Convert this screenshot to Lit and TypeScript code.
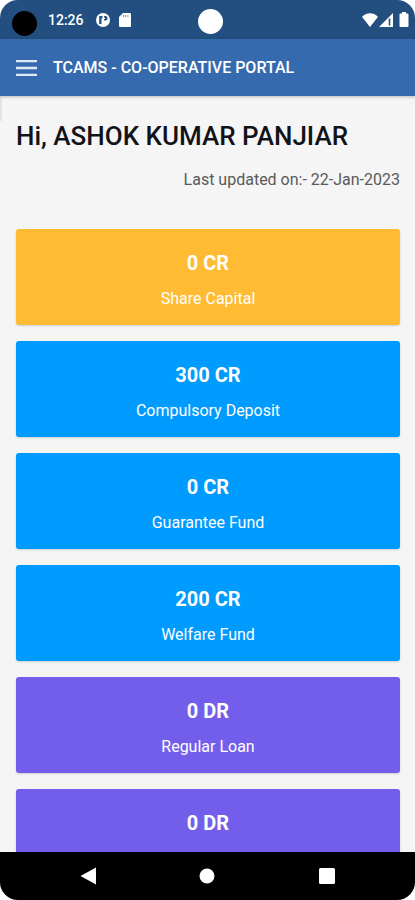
import { LitElement, html, css, svg, nothing } from "lit";
import { customElement, property } from "lit/decorators.js";

interface Account {
  amount: string;
  label?: string;
  tone: "amber" | "blue" | "violet";
}

const accounts: Account[] = [
  { amount: "0 CR", label: "Share Capital", tone: "amber" },
  { amount: "300 CR", label: "Compulsory Deposit", tone: "blue" },
  { amount: "0 CR", label: "Guarantee Fund", tone: "blue" },
  { amount: "200 CR", label: "Welfare Fund", tone: "blue" },
  { amount: "0 DR", label: "Regular Loan", tone: "violet" },
  { amount: "0 DR", tone: "violet" },
];

@customElement("status-bar")
class StatusBar extends LitElement {
  static styles = css`
    :host {
      display: grid;
      grid-template-columns: 1fr auto 1fr;
      align-items: center;
      height: 39px;
      padding: 0 6px 0 12px;
      box-sizing: border-box;
      background: #234f80;
      color: #fff;
    }
    svg {
      display: block;
      fill: #fff;
    }
    .side {
      display: flex;
      align-items: center;
    }
    .end {
      justify-content: flex-end;
      gap: 1px;
    }
    .camera {
      width: 25px;
      height: 25px;
      margin-top: 8px;
      border-radius: 50%;
      background: #000;
    }
    .time {
      margin: 0 12px 0 11px;
      font-size: 14px;
      line-height: 16px;
      font-weight: 500;
    }
    .card {
      margin-left: 9px;
    }
    .lens {
      width: 25px;
      height: 25px;
      margin-top: 4px;
      border-radius: 50%;
      background: #fff;
    }
    .battery {
      margin-left: 5px;
    }
  `;

  render() {
    return html`
      <div class="side">
        <span class="camera"></span>
        <span class="time">12:26</span>
        <svg width="14" height="14" viewBox="0 0 14 14" aria-hidden="true">
          <circle cx="7" cy="7" r="7"></circle>
          <path d="M3.200 3h3.300v2.200H5.500V11H3.200zM8 3h1.300a2.300 2.300 0 0 1 0 4.600H8V6h1V4.600H8z" fill="#234f80"></path>
        </svg>
        <svg class="card" width="12" height="14" viewBox="0 0 12 14" aria-hidden="true">
          <path d="M4 0h6.800A1.200 1.200 0 0 1 12 1.200v11.600a1.200 1.200 0 0 1-1.200 1.200H1.200A1.200 1.200 0 0 1 0 12.800V4z"></path>
          <path d="M4.500 2v2.200M6.700 2v2.200M8.900 2v2.200" stroke="#7895b4" stroke-width="1"></path>
        </svg>
      </div>
      <span class="lens"></span>
      <div class="side end">
        <svg width="16" height="14" viewBox="0 0 16 14" aria-hidden="true">
          <path d="M8 14 .300 4.200Q0 3.700.500 3.300C2.700 1.200 5.200.300 8 .300s5.300.900 7.500 3q.500.400.200.900z"></path>
        </svg>
        <svg width="14" height="14" viewBox="0 0 14 14" aria-hidden="true">
          <path d="M0 14 14 0v14z"></path>
          <path d="M10.500 5.500v7" stroke="#234f80" stroke-width="1.600"></path>
        </svg>
        <svg class="battery" width="10" height="15" viewBox="0 0 10 15" aria-hidden="true">
          <path d="M3 0h4v1.600h1.500A1 1 0 0 1 9.500 2.600V14a1 1 0 0 1-1 1h-7a1 1 0 0 1-1-1V2.600a1 1 0 0 1 1-1H3z"></path>
        </svg>
      </div>
    `;
  }
}

@customElement("account-card")
class AccountCard extends LitElement {
  @property() amount = "";
  @property() label?: string;
  @property() tone = "blue";

  static styles = css`
    :host {
      display: block;
      flex: none;
    }
    .card {
      display: flex;
      flex-direction: column;
      align-items: center;
      gap: 12px;
      height: 96px;
      padding-top: 22px;
      box-sizing: border-box;
      border-radius: 3px;
      color: #fff;
      box-shadow: 0 1px 2px rgba(0, 0, 0, 0.16);
    }
    .amber {
      background: #ffbb33;
    }
    .blue {
      background: #009bff;
    }
    .violet {
      background: #735eec;
    }
    .amount {
      margin: 0;
      font-size: 20px;
      line-height: 24px;
      font-weight: 700;
    }
    .label {
      margin: 0;
      font-size: 16px;
      line-height: 24px;
    }
  `;

  render() {
    return html`
      <article class="card ${this.tone}">
        <h2 class="amount">${this.amount}</h2>
        ${this.label ? html`<p class="label">${this.label}</p>` : nothing}
      </article>
    `;
  }
}

@customElement("app-root")
class AppRoot extends LitElement {
  static styles = css`
    :host {
      display: flex;
      flex-direction: column;
      height: 100vh;
      overflow: hidden;
      border-radius: 18px;
      background: #f5f5f5;
      font-family: Roboto, "Liberation Sans", sans-serif;
    }
    button {
      display: grid;
      place-items: center;
      padding: 0;
      border: 0;
      background: none;
      cursor: pointer;
    }
    svg {
      display: block;
      fill: #fff;
    }
    status-bar,
    .header,
    .system {
      flex: none;
    }
    .header {
      display: flex;
      align-items: center;
      gap: 16px;
      height: 57px;
      padding: 1px 16px 0;
      box-sizing: border-box;
      background: #356bae;
      color: #fff;
      box-shadow: 0 1px 3px rgba(0, 0, 0, 0.25);
      z-index: 1;
    }
    .title {
      margin: 0;
      font-size: 16px;
      line-height: 24px;
      font-weight: 500;
    }
    .content {
      position: relative;
      display: flex;
      flex-direction: column;
      flex: 1;
      min-height: 0;
      padding: 24px 15px 0 16px;
      overflow: hidden;
    }
    .edge {
      position: absolute;
      top: 0;
      left: 0;
      width: 2px;
      height: 25px;
      background: #e4e4e4;
    }
    .greeting {
      margin: 0;
      font-size: 26px;
      line-height: 32px;
      font-weight: 500;
      color: #111318;
    }
    .updated {
      margin: 16px 0 37px;
      font-size: 16px;
      line-height: 24px;
      text-align: right;
      color: #5a5a5a;
    }
    .cards {
      display: flex;
      flex-direction: column;
      gap: 16px;
    }
    .system {
      display: grid;
      grid-template-columns: repeat(3, 1fr);
      height: 48px;
      padding: 0 28px;
      background: #000;
    }
  `;

  render() {
    return html`
      <status-bar></status-bar>
      <header class="header">
        <button aria-label="Menu">
          <svg width="21" height="16" viewBox="0 0 21 16">
            <path d="M0 0h21v2.300H0zM0 6.850h21v2.300H0zM0 13.700h21V16H0z" fill="#dfe9f7"></path>
          </svg>
        </button>
        <h1 class="title">TCAMS - CO-OPERATIVE PORTAL</h1>
      </header>
      <main class="content">
        <span class="edge"></span>
        <h2 class="greeting">Hi, ASHOK KUMAR PANJIAR</h2>
        <p class="updated">Last updated on:- 22-Jan-2023</p>
        <section class="cards">
          ${accounts.map(
            (a) => html`<account-card .amount=${a.amount} .label=${a.label} .tone=${a.tone}></account-card>`
          )}
        </section>
      </main>
      <nav class="system">
        ${this.key("Back", svg`<path d="M1.500 9 17 .5v17z"></path>`)}
        ${this.key("Home", svg`<circle cx="9" cy="9" r="7.500"></circle>`)}
        ${this.key("Recent apps", svg`<rect x="1" y="1" width="16" height="16" rx="1.500"></rect>`)}
      </nav>
    `;
  }

  private key(label: string, shape: unknown) {
    return html`<button aria-label=${label}>
      <svg width="18" height="18" viewBox="0 0 18 18">${shape}</svg>
    </button>`;
  }
}
